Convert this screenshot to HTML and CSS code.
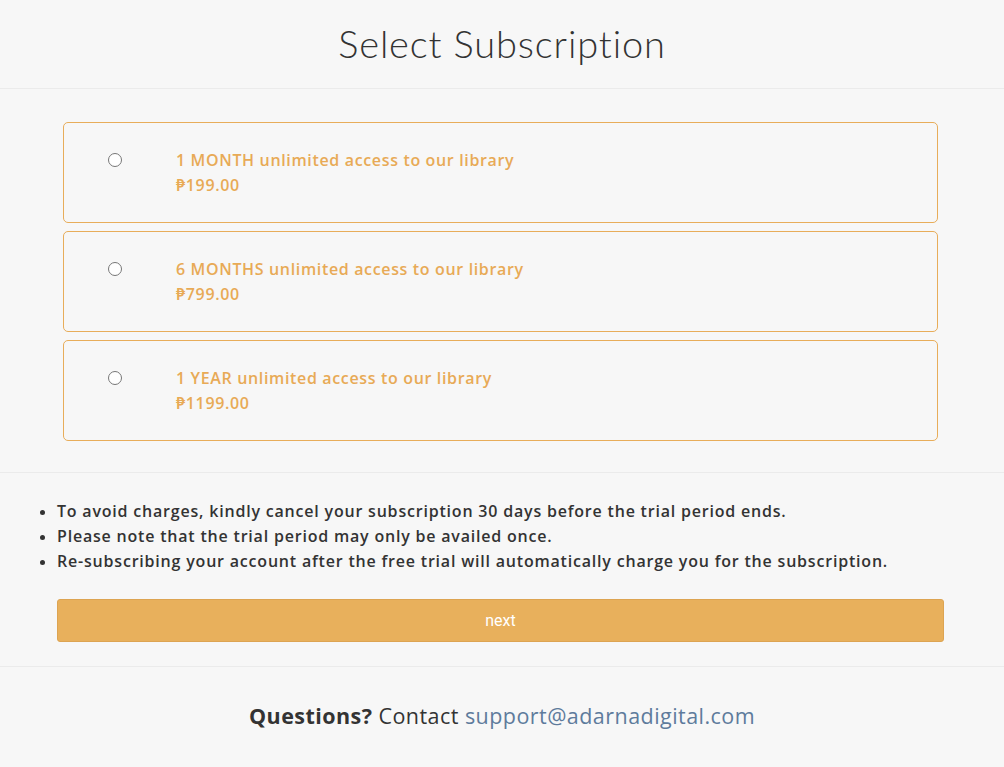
FILE: index.html
```html
<!DOCTYPE html>
<html>
<head>
<meta charset="utf-8">
<link rel="stylesheet" href="styles.css">
</head>
<body>
<header class="header">
  <h1 class="title">Select Subscription</h1>
</header>
<section class="plans">
  <label class="plan">
    <span class="radio-cell"><input type="radio" name="plan" class="radio"></span>
    <span class="plan-text">
      <span class="plan-name">1 MONTH unlimited access to our library</span>
      <span class="plan-price">₱199.00</span>
    </span>
  </label>
  <label class="plan">
    <span class="radio-cell"><input type="radio" name="plan" class="radio"></span>
    <span class="plan-text">
      <span class="plan-name">6 MONTHS unlimited access to our library</span>
      <span class="plan-price">₱799.00</span>
    </span>
  </label>
  <label class="plan">
    <span class="radio-cell"><input type="radio" name="plan" class="radio"></span>
    <span class="plan-text">
      <span class="plan-name">1 YEAR unlimited access to our library</span>
      <span class="plan-price">₱1199.00</span>
    </span>
  </label>
</section>
<section class="notes">
  <ul class="note-list">
    <li>To avoid charges, kindly cancel your subscription 30 days before the trial period ends.</li>
    <li>Please note that the trial period may only be availed once.</li>
    <li>Re-subscribing your account after the free trial will automatically charge you for the subscription.</li>
  </ul>
  <button class="next-btn">next</button>
</section>
<footer class="footer">
  <p class="contact"><strong class="q">Questions?</strong> Contact <a class="mail" href="#">support@adarnadigital.com</a></p>
</footer>
</body>
</html>
```

FILE: styles.css
```css
html, body {
  margin: 0;
  padding: 0;
  background: #f7f7f7;
}
body {
  font-family: "Open Sans", "Noto Sans", sans-serif;
  color: #333;
}
.header {
  height: 88px;
  border-bottom: 1px solid #ebebeb;
  display: flex;
  align-items: center;
  justify-content: center;
}
.title {
  margin: 0;
  font-family: "Lato", sans-serif;
  font-weight: 300;
  font-size: 38px;
  color: #333;
  letter-spacing: 0.85px;
  padding-bottom: 3px;
}
.plans {
  padding: 33px 66px 31px 63px;
  display: flex;
  flex-direction: column;
  gap: 8px;
  border-bottom: 1px solid #ebebeb;
}
.plan {
  display: flex;
  align-items: flex-start;
  border: 1px solid #e8ad5a;
  border-radius: 5px;
  box-sizing: border-box;
  height: 101px;
  padding-top: 25px;
}
.radio-cell {
  width: 112px;
  display: flex;
  justify-content: center;
  padding-top: 5px;
  padding-right: 10px;
  box-sizing: border-box;
}
.radio {
  margin: 0;
  width: 14px;
  height: 14px;
}
.plan-text {
  display: flex;
  flex-direction: column;
  font-weight: 600;
  font-size: 16px;
  line-height: 25px;
  letter-spacing: 0.65px;
  color: #e8aa56;
}
.notes {
  padding: 26px 60px 24px 57px;
  border-bottom: 1px solid #ebebeb;
}
.note-list {
  margin: 0 0 25px 0;
  padding: 0;
  list-style: none;
}
.note-list li {
  position: relative;
  font-size: 16px;
  line-height: 25px;
  font-weight: 600;
  letter-spacing: 0.8px;
  color: #333;
}
.note-list li::before {
  content: "";
  position: absolute;
  left: -17px;
  top: 11px;
  width: 5px;
  height: 5px;
  border-radius: 50%;
  background: #333;
}
.next-btn {
  display: block;
  width: 100%;
  height: 43px;
  border: 1px solid #dda452;
  border-radius: 3px;
  background: #e8b05c;
  color: #fff;
  font-family: "Roboto", sans-serif;
  font-size: 16px;
}
.footer {
  display: flex;
  justify-content: center;
  padding-top: 34px;
}
.contact {
  margin: 0;
  font-size: 21.5px;
  letter-spacing: 0.45px;
  color: #333;
}
.q {
  font-weight: 700;
}
.mail {
  color: #5e7b9c;
  text-decoration: none;
}
```
